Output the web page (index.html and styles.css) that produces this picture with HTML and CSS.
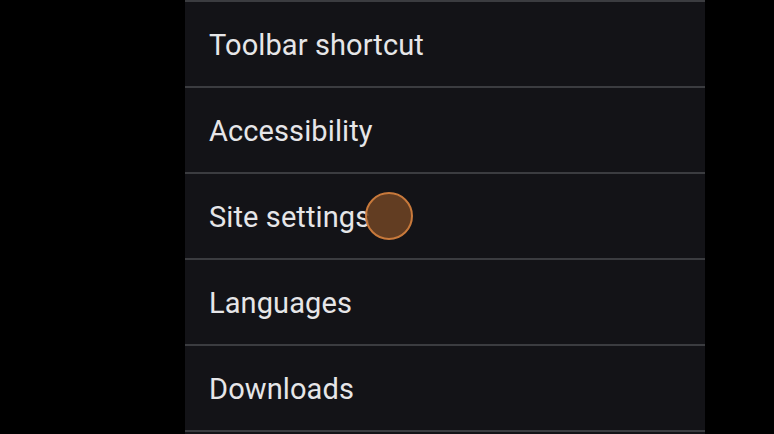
FILE: index.html
```html
<!DOCTYPE html>
<html>
<head>
<meta charset="utf-8">
<link rel="stylesheet" href="styles.css">
</head>
<body>
<div class="page">
  <div class="panel">
    <div class="row"><span class="label">Toolbar shortcut</span></div>
    <div class="row"><span class="label">Accessibility</span></div>
    <div class="row"><span class="label">Site settings</span><span class="touch"></span></div>
    <div class="row"><span class="label">Languages</span></div>
    <div class="row"><span class="label">Downloads</span></div>
  </div>
</div>
</body>
</html>
```
FILE: styles.css
```css
html, body {
  margin: 0;
  padding: 0;
  background: #000;
  height: 100%;
  overflow: hidden;
}
.page {
  width: 774px;
  height: 434px;
  display: flex;
  justify-content: flex-start;
}
.panel {
  margin-left: 185px;
  width: 520px;
  height: 434px;
  background: #131317;
  border-top: 2px solid #3b3c40;
}
.row {
  position: relative;
  height: 84px;
  box-sizing: content-box;
  border-bottom: 2px solid #3b3c40;
  display: flex;
  align-items: center;
  padding-left: 24px;
}
.label {
  font-family: Roboto, "Noto Sans", sans-serif;
  font-size: 29px;
  color: #e6e6e8;
  letter-spacing: 0.1px;
  padding-top: 2px;
}
.touch {
  position: absolute;
  left: 180px;
  top: 18px;
  width: 44px;
  height: 44px;
  border-radius: 50%;
  background: rgba(108, 66, 36, 0.9);
  border: 2px solid #c8793b;
}
```
